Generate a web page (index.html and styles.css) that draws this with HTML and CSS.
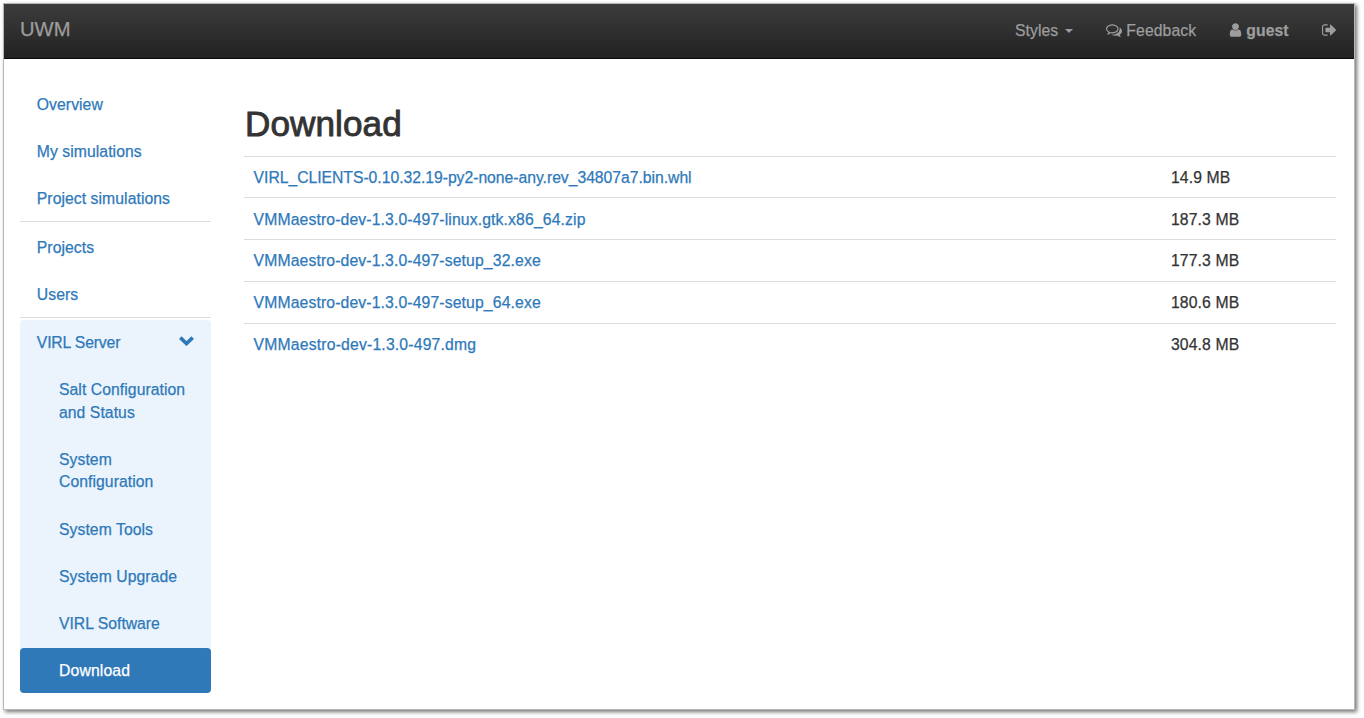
FILE: index.html
```html
<!DOCTYPE html>
<html lang="en">
<head>
<meta charset="utf-8">
<title>UWM - Download</title>
<link rel="stylesheet" href="styles.css">
</head>
<body>
<div class="window">
  <header class="navbar">
    <a class="brand">UWM</a>
    <nav class="navbar-links">
      <a class="styles-link">Styles <span class="caret"></span></a>
      <a class="feedback-link"><svg class="icon" viewBox="0 0 1792 1792"><path d="M704 384q-153 0-286 52t-211.5 141-78.5 191q0 82 53 158t149 132l97 56-35 84q34-20 62-39l44-31 53 10q78 14 153 14 153 0 286-52t211.5-141 78.5-191-78.5-191-211.5-141-286-52zm0-128q191 0 353.5 68.5t256.5 186.5 94 257-94 257-256.5 186.5-353.5 68.5q-86 0-176-16-124 88-278 128-36 9-86 16h-3q-11 0-20.5-8t-11.5-21q-1-3-1-6.5t.5-6.5 2-6l2.5-5 3.5-5.5 4-5 4.5-5 4-4.5q5-6 23-25t26-29.5 22.5-29 25-38.5 20.5-44q-124-72-195-177t-71-224q0-139 94-257t256.5-186.5 353.5-68.5zm822 1169q10 24 20.5 44t25 38.5 22.5 29 26 29.5 23 25q1 1 4 4.5t4.5 5 4 5 3.5 5.5l2.5 5 2 6 .5 6.5-1 6.5q-3 14-13 22t-22 7q-50-7-86-16-154-40-278-128-90 16-176 16-271 0-472-132 58 4 88 4 161 0 309-45t264-129q125-92 192-212t67-254q0-77-23-152 129 71 204 178t75 230q0 120-71 224.5t-195 176.5z"/></svg><span>Feedback</span></a>
      <a class="user-link"><svg class="icon icon-user" viewBox="256 0 1280 1792"><path d="M1536 1399q0 109-62.5 187t-150.5 78h-854q-88 0-150.5-78t-62.5-187q0-85 8.5-160.5t31.5-152 58.5-131 94-89 134.5-34.5q131 128 313 128t313-128q76 0 134.5 34.5t94 89 58.5 131 31.5 152 8.5 160.5zm-256-887q0 159-112.5 271.5t-271.5 112.5-271.5-112.5-112.5-271.5 112.5-271.5 271.5-112.5 271.5 112.5 112.5 271.5z"/></svg><strong>guest</strong></a>
      <a class="logout-link"><svg class="icon" viewBox="64 0 1600 1792"><path d="M704 1440q0 4 1 20t.5 26.5-3 23.5-10 19.5-20.5 6.5h-320q-119 0-203.5-84.5t-84.5-203.5v-704q0-119 84.5-203.5t203.5-84.5h320q13 0 22.5 9.5t9.5 22.5q0 4 1 20t.5 26.5-3 23.5-10 19.5-20.5 6.5h-320q-66 0-113 47t-47 113v704q0 66 47 113t113 47h312l11.5 1 11.5 3 8 5.5 7 9 2 13.5zm928-544q0 26-19 45l-544 544q-19 19-45 19t-45-19-19-45v-288h-448q-26 0-45-19t-19-45v-384q0-26 19-45t45-19h448v-288q0-26 19-45t45-19 45 19l544 544q19 19 19 45z"/></svg></a>
    </nav>
  </header>
  <div class="layout">
    <nav class="sidebar">
      <div class="group">
        <a>Overview</a>
        <a>My simulations</a>
        <a>Project simulations</a>
      </div>
      <div class="group">
        <a>Projects</a>
        <a>Users</a>
      </div>
      <div class="server">
        <a class="server-title">VIRL Server<svg class="chevron" viewBox="0 0 15 10"><path d="M1.3 1.6 7.5 7.6 13.7 1.6"/></svg></a>
        <a>Salt Configuration<br>and Status</a>
        <a>System<br>Configuration</a>
        <a>System Tools</a>
        <a>System Upgrade</a>
        <a class="software">VIRL Software</a>
        <a class="active">Download</a>
      </div>
    </nav>
    <main class="content">
      <h1>Download</h1>
      <table class="files">
        <tr><td><a class="wheel">VIRL_CLIENTS-0.10.32.19-py2-none-any.rev_34807a7.bin.whl</a></td><td class="size">14.9 MB</td></tr>
        <tr><td><a>VMMaestro-dev-1.3.0-497-linux.gtk.x86_64.zip</a></td><td class="size">187.3 MB</td></tr>
        <tr><td><a>VMMaestro-dev-1.3.0-497-setup_32.exe</a></td><td class="size">177.3 MB</td></tr>
        <tr><td><a>VMMaestro-dev-1.3.0-497-setup_64.exe</a></td><td class="size">180.6 MB</td></tr>
        <tr><td><a class="dmg">VMMaestro-dev-1.3.0-497.dmg</a></td><td class="size">304.8 MB</td></tr>
      </table>
    </main>
  </div>
</div>
</body>
</html>
```
FILE: styles.css
```css
* { box-sizing: border-box; }
html { height: 718px; }
body {
  margin: 0;
  height: 718px;
  padding: 3px 0 0 3px;
  background: #fff;
  color: #333;
  font: 15.74px/22.4px "Liberation Sans", Arial, sans-serif;
  letter-spacing: .06px;
  -webkit-text-stroke: .25px;
}
a { color: #2e79b9; text-decoration: none; white-space: nowrap; }

.window {
  width: 1352px;
  height: 707px;
  border: 1px solid #b8b8b8;
  background: #fff;
  box-shadow: 2px 2px 4px rgba(0, 0, 0, .55);
}

.navbar {
  display: flex;
  justify-content: space-between;
  height: 55px;
  padding: 0 18px 0 16px;
  border-bottom: 1px solid #090909;
  background: linear-gradient(#3c3c3c, #222);
}
.navbar a { display: flex; align-items: center; color: #9d9d9d; }
.navbar .brand { font-size: 20.2px; padding-bottom: 3px; letter-spacing: 0; }
.navbar-links { display: flex; gap: 33px; letter-spacing: .1px; }
.caret {
  margin-left: 7px;
  border: 4.5px solid transparent;
  border-top-color: #9d9d9d;
  border-bottom: 0;
}
.icon { width: 16px; height: 16px; margin: 0 4px 2px 0; fill: currentColor; }
.icon-user { width: 13px; }
.logout-link .icon { width: 14.3px; margin-right: 0; }

.layout { display: flex; padding: 22.8px 18px 0 16px; }

.sidebar { width: 191px; flex: none; }
.sidebar a { display: block; padding: 12.2px 16.8px 10.4px; }
.sidebar a + a { margin-top: 2.25px; }
.group { border-bottom: 1.1px solid #ddd; margin-bottom: 2.2px; }
.server { background: #ebf4fc; border-radius: 4px; }
.server a { padding-left: 39px; }
.server .server-title {
  display: flex;
  justify-content: space-between;
  padding-left: 16.8px;
  letter-spacing: -.15px;
}
.server .software { letter-spacing: 0; }
.chevron { width: 15px; height: 10px; margin-top: 4px; fill: none; stroke: #2e79b9; stroke-width: 3.6; }
.server .active { background: #2f79b9; color: #fff; border-radius: 4px; letter-spacing: .15px; }

.content { flex: 1; margin-left: 33px; }
h1 {
  margin: 22px 0 13px 1px;
  font-size: 35.1px;
  line-height: 39px;
  font-weight: 400;
  letter-spacing: .1px;
  -webkit-text-stroke: .9px #333;
}
.files { width: 100%; border-collapse: collapse; table-layout: fixed; }
.files td { height: 41.7px; padding: 2px 9px 0; border-top: 1px solid #ddd; vertical-align: middle; }
.files a { margin-left: .6px; letter-spacing: .13px; }
.files .wheel { letter-spacing: -.03px; }
.files .dmg { letter-spacing: .18px; }
.files .size { width: 174px; letter-spacing: .12px; }
```
